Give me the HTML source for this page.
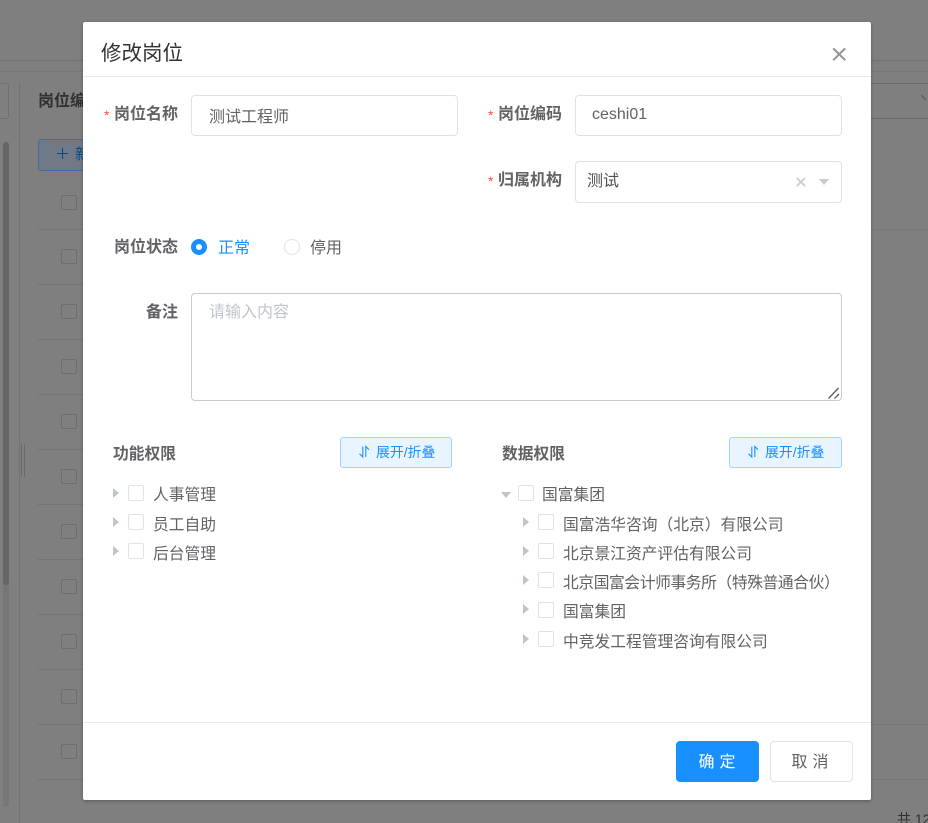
<!DOCTYPE html>
<html lang="zh">
<head>
<meta charset="utf-8">
<title>修改岗位</title>
<style>
html,body{margin:0;padding:0;width:928px;height:823px;overflow:hidden;background:#7f7f7f;}
body{position:relative;font-family:"Liberation Sans","Noto Sans CJK SC",sans-serif;color:#606266;font-size:15.75px;}
.a{position:absolute;box-sizing:border-box;}
.t{position:absolute;white-space:nowrap;line-height:24px;}
.hl{position:absolute;height:1px;background:#747474;}
.bgcb{position:absolute;left:61px;width:16px;height:15px;border:1px solid #6e6e6e;border-radius:2px;box-sizing:border-box;}
.modal{position:absolute;left:83px;top:22px;width:788px;height:778px;background:#fff;border-radius:2px;box-shadow:0 1px 3px rgba(0,0,0,.3);}
.lbl{font-weight:700;color:#606266;font-size:16px;}
.star{color:#ff4d4f;font-size:14px;}
.inp{position:absolute;box-sizing:border-box;border:1px solid #e0e2e8;border-radius:4px;background:#fff;}
.cb{position:absolute;width:16px;height:16px;border:1px solid #e0e2e8;border-radius:2px;box-sizing:border-box;background:#fff;}
.tri{position:absolute;width:0;height:0;border-style:solid;border-width:5px 0 5px 6px;border-color:transparent transparent transparent #c0c4cc;}
.tb{position:absolute;box-sizing:border-box;width:112px;height:31px;background:#e8f4ff;border:1px solid #a3d3ff;border-radius:3px;color:#1890ff;font-size:14px;line-height:29px;white-space:nowrap;}
.tb span{position:absolute;top:0;}
.tb svg{position:absolute;left:17px;top:7px;}
</style>
</head>
<body>
<!-- background page -->
<div class="hl" style="left:0;top:60px;width:928px;background:#6f6f6f"></div>
<div class="hl" style="left:0;top:71px;width:928px;background:#767676"></div>
<div class="hl" style="left:871px;top:83px;width:57px;background:#696969"></div>
<div class="hl" style="left:871px;top:118px;width:57px;background:#696969"></div>
<div class="a" style="left:-10px;top:83px;width:19px;height:36px;border:1px solid #6f6f6f;border-radius:3px"></div>
<div class="a" style="left:19px;top:83px;width:1px;height:740px;background:#737373"></div>
<div class="a" style="left:3px;top:142px;width:6px;height:665px;background:#777777;border-radius:3px"></div>
<div class="a" style="left:3px;top:142px;width:6px;height:443px;background:#656565;border-radius:3px"></div>
<div class="a" style="left:21px;top:444px;width:1px;height:33px;background:#696969"></div>
<div class="a" style="left:24px;top:444px;width:1px;height:33px;background:#696969"></div>
<div class="t" style="left:38px;top:90px;font-weight:700;color:#303030;font-size:16px">岗位编</div>
<div class="a" style="left:38px;top:139px;width:60px;height:32px;background:#6f7a86;border:1px solid #3d6e9e;border-radius:3px"></div>
<svg class="a" style="left:57px;top:148px" width="11" height="11" viewBox="0 0 11 11"><path d="M5.5 0 V11 M0 5.5 H11" stroke="#0c4a85" stroke-width="1.1" fill="none"/></svg>
<div class="t" style="left:75px;top:143px;font-size:15px;color:#0c4a85">新</div>
<div class="hl" style="left:38px;top:229px;width:45px"></div>
<div class="hl" style="left:38px;top:284px;width:45px"></div>
<div class="hl" style="left:38px;top:339px;width:45px"></div>
<div class="hl" style="left:38px;top:394px;width:45px"></div>
<div class="hl" style="left:38px;top:449px;width:45px"></div>
<div class="hl" style="left:38px;top:504px;width:45px"></div>
<div class="hl" style="left:38px;top:559px;width:45px"></div>
<div class="hl" style="left:38px;top:614px;width:45px"></div>
<div class="hl" style="left:38px;top:669px;width:45px"></div>
<div class="hl" style="left:38px;top:724px;width:45px"></div>
<div class="hl" style="left:38px;top:779px;width:45px"></div>
<div class="bgcb" style="top:195px"></div>
<div class="bgcb" style="top:249px"></div>
<div class="bgcb" style="top:304px"></div>
<div class="bgcb" style="top:359px"></div>
<div class="bgcb" style="top:414px"></div>
<div class="bgcb" style="top:469px"></div>
<div class="bgcb" style="top:524px"></div>
<div class="bgcb" style="top:579px"></div>
<div class="bgcb" style="top:634px"></div>
<div class="bgcb" style="top:689px"></div>
<div class="bgcb" style="top:744px"></div>
<div class="hl" style="left:871px;top:229px;width:57px;background:#777777"></div>
<div class="hl" style="left:871px;top:724px;width:57px;background:#757575"></div>
<div class="hl" style="left:871px;top:779px;width:57px;background:#757575"></div>
<svg class="a" style="left:921px;top:94px" width="7" height="10"><path d="M0 1 L5 6" stroke="#5f5f5f" stroke-width="1.4" fill="none"/></svg>
<div class="t" style="left:897px;top:807px;color:#303030;font-size:14px">共 12</div>

<!-- modal -->
<div class="modal"></div>
<div class="t" style="left:101px;top:41px;font-size:20.5px;line-height:26px;color:#303133">修改岗位</div>
<svg class="a" style="left:832px;top:47px" width="15" height="15" viewBox="0 0 15 15"><path d="M1.2 1.4 L13.2 13.2 M13.2 1.4 L1.2 13.2" stroke="#909399" stroke-width="2" fill="none"/></svg>
<div class="a" style="left:83px;top:76px;width:788px;height:1px;background:#e8eaee"></div>

<div class="t star" style="left:104px;top:107px;line-height:16px">*</div>
<div class="t lbl" style="left:114px;top:103px">岗位名称</div>
<div class="inp" style="left:191px;top:95px;width:267px;height:41px"></div>
<div class="t" style="left:209px;top:106px;color:#606266;font-size:16px">测试工程师</div>

<div class="t star" style="left:488px;top:107px;line-height:16px">*</div>
<div class="t lbl" style="left:498px;top:103px">岗位编码</div>
<div class="inp" style="left:575px;top:95px;width:267px;height:41px"></div>
<div class="t" style="left:592px;top:103px;color:#606266;font-size:16px">ceshi01</div>

<div class="t star" style="left:488px;top:173px;line-height:16px">*</div>
<div class="t lbl" style="left:498px;top:169px">归属机构</div>
<div class="inp" style="left:575px;top:161px;width:267px;height:42px"></div>
<div class="t" style="left:587px;top:170px;color:#4f4f4f;font-size:16px">测试</div>
<svg class="a" style="left:796px;top:177px" width="10" height="10" viewBox="0 0 10 10"><path d="M1 1 L9 9 M9 1 L1 9" stroke="#cccccc" stroke-width="1.9" fill="none"/></svg>
<div class="a" style="left:819px;top:179px;width:0;height:0;border-style:solid;border-width:6px 5.5px 0 5.5px;border-color:#cccccc transparent transparent transparent"></div>

<div class="t lbl" style="left:114px;top:236px">岗位状态</div>
<div class="a" style="left:191px;top:239px;width:16px;height:16px;border-radius:50%;background:#1890ff"></div>
<div class="a" style="left:196px;top:244px;width:6px;height:6px;border-radius:50%;background:#fff"></div>
<div class="t" style="left:218px;top:237px;color:#1890ff;font-size:16px">正常</div>
<div class="a" style="left:284px;top:239px;width:16px;height:16px;border-radius:50%;background:#fff;border:1px solid #e0e2e8"></div>
<div class="t" style="left:310px;top:237px;color:#606266;font-size:16px">停用</div>

<div class="t lbl" style="left:146px;top:301px">备注</div>
<div class="inp" style="left:191px;top:293px;width:651px;height:108px;border-color:#c9cbd0"></div>
<div class="t" style="left:209px;top:301px;color:#c0c4cc;font-size:16px">请输入内容</div>
<svg class="a" style="left:827px;top:386px" width="14" height="14" viewBox="0 0 14 14"><path d="M1.5 12.5 L11.5 2 M7.5 12.5 L12 8" stroke="#5a5a5a" stroke-width="1.3" fill="none"/></svg>

<div class="t lbl" style="left:113px;top:443px;font-size:15.75px">功能权限</div>
<div class="tb" style="left:340px;top:437px"><svg width="14" height="14" viewBox="0 0 14 14"><path d="M4.8 1.5 V12 L1.5 8.8 M7.8 12 V1.5 L11 4.8" stroke="#1890ff" stroke-width="1.1" fill="none"/></svg><span style="left:35px;font-size:13.9px">展开/折叠</span></div>
<div class="tri" style="left:113px;top:488px"></div>
<div class="cb" style="left:128px;top:485px"></div>
<div class="t" style="left:153px;top:484px">人事管理</div>
<div class="tri" style="left:113px;top:517px"></div>
<div class="cb" style="left:128px;top:514px"></div>
<div class="t" style="left:153px;top:514px">员工自助</div>
<div class="tri" style="left:113px;top:546px"></div>
<div class="cb" style="left:128px;top:543px"></div>
<div class="t" style="left:153px;top:543px">后台管理</div>

<div class="t lbl" style="left:502px;top:443px;font-size:15.75px">数据权限</div>
<div class="tb" style="left:729px;top:437px;width:113px"><svg width="14" height="14" viewBox="0 0 14 14"><path d="M4.8 1.5 V12 L1.5 8.8 M7.8 12 V1.5 L11 4.8" stroke="#1890ff" stroke-width="1.1" fill="none"/></svg><span style="left:35px;font-size:13.9px">展开/折叠</span></div>
<div class="a" style="left:501px;top:492px;width:0;height:0;border-style:solid;border-width:6px 5px 0 5px;border-color:#c0c4cc transparent transparent transparent"></div>
<div class="cb" style="left:518px;top:485px"></div>
<div class="t" style="left:542px;top:484px">国富集团</div>
<div class="tri" style="left:523px;top:517px"></div>
<div class="cb" style="left:538px;top:514px"></div>
<div class="t" style="left:563px;top:514px">国富浩华咨询（北京）有限公司</div>
<div class="tri" style="left:523px;top:546px"></div>
<div class="cb" style="left:538px;top:543px"></div>
<div class="t" style="left:563px;top:543px">北京景江资产评估有限公司</div>
<div class="tri" style="left:523px;top:575px"></div>
<div class="cb" style="left:538px;top:572px"></div>
<div class="t" style="left:563px;top:572px;letter-spacing:-.4px">北京国富会计师事务所（特殊普通合伙）</div>
<div class="tri" style="left:523px;top:604px"></div>
<div class="cb" style="left:538px;top:602px"></div>
<div class="t" style="left:563px;top:601px">国富集团</div>
<div class="tri" style="left:523px;top:634px"></div>
<div class="cb" style="left:538px;top:631px"></div>
<div class="t" style="left:563px;top:631px">中竞发工程管理咨询有限公司</div>

<div class="a" style="left:83px;top:722px;width:788px;height:1px;background:#e8eaee"></div>
<div class="a" style="left:676px;top:741px;width:83px;height:41px;background:#1890ff;border-radius:4px"></div>
<div class="t" style="left:678px;top:751px;width:83px;text-align:center;color:#fff;letter-spacing:5px;font-size:16px">确定</div>
<div class="a" style="left:770px;top:741px;width:83px;height:41px;background:#fff;border:1px solid #e0e2e8;border-radius:4px"></div>
<div class="t" style="left:771px;top:751px;width:83px;text-align:center;color:#606266;letter-spacing:5px;font-size:16px">取消</div>
</body>
</html>
